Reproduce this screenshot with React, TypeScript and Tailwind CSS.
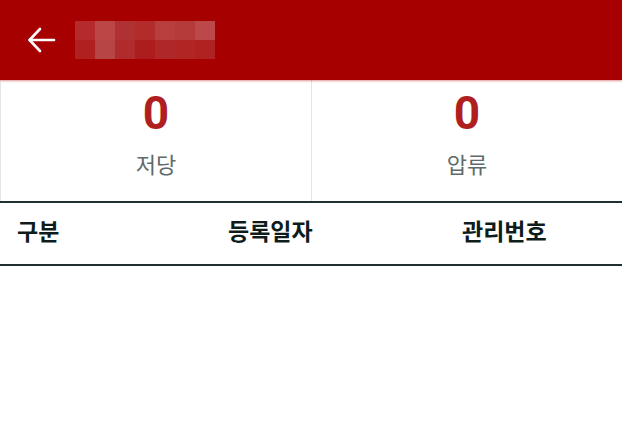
import React from "react";

const row1 = ["#b52b2b", "#bb4646", "#b03131", "#b22c2c", "#b93f3f", "#b53a3a", "#bc4949"];
const row2 = ["#b02020", "#b84545", "#b02b2b", "#ae1d1d", "#b02727", "#b12525", "#b02121"];

export default function App() {
  return (
    <div className="w-[622px] h-[424px] bg-white overflow-hidden" style={{ fontFamily: '"Noto Sans", "Noto Sans CJK KR", sans-serif' }}>
      <div className="h-[80px] bg-[#a70000] flex items-center shadow-[0_1px_2px_rgba(200,40,40,0.5)] relative z-10">
        <div className="w-[75px] flex justify-center pl-[8px]">
          <svg width="30" height="26" viewBox="0 0 30 26" fill="none" stroke="white" strokeWidth="2.6" strokeLinecap="round" strokeLinejoin="round">
            <path d="M27 13H3" />
            <path d="M13 2L2.5 13L13 24" />
          </svg>
        </div>
        <div className="flex flex-col">
          <div className="flex">
            {row1.map((c, i) => (
              <div key={i} className="w-[20px] h-[19px]" style={{ background: c }} />
            ))}
          </div>
          <div className="flex">
            {row2.map((c, i) => (
              <div key={i} className="w-[20px] h-[19px]" style={{ background: c }} />
            ))}
          </div>
        </div>
      </div>
      <div className="flex h-[121px] border-l border-[#e4e6e6]">
        <div className="flex-1 flex flex-col items-center border-r border-[#e4e6e6]">
          <div className="mt-[5px] text-[46px] leading-[56px] font-bold text-[#b01f1f]" style={{ fontFamily: 'Roboto, sans-serif' }}>0</div>
          <div className="mt-[8px] text-[22px] leading-[30px] text-[#5f6a6a]">저당</div>
        </div>
        <div className="flex-1 flex flex-col items-center">
          <div className="mt-[5px] text-[46px] leading-[56px] font-bold text-[#b01f1f]" style={{ fontFamily: 'Roboto, sans-serif' }}>0</div>
          <div className="mt-[8px] text-[22px] leading-[30px] text-[#5f6a6a]">압류</div>
        </div>
      </div>
      <div className="h-[2px] bg-[#203030]" />
      <div className="flex items-center h-[61px] pb-[4px] text-[23px] font-bold text-[#0e1c1c]">
        <div className="w-[228px] pl-[17px]">구분</div>
        <div className="w-[234px]">등록일자</div>
        <div>관리번호</div>
      </div>
      <div className="h-[2px] bg-[#203030]" />
    </div>
  );
}
